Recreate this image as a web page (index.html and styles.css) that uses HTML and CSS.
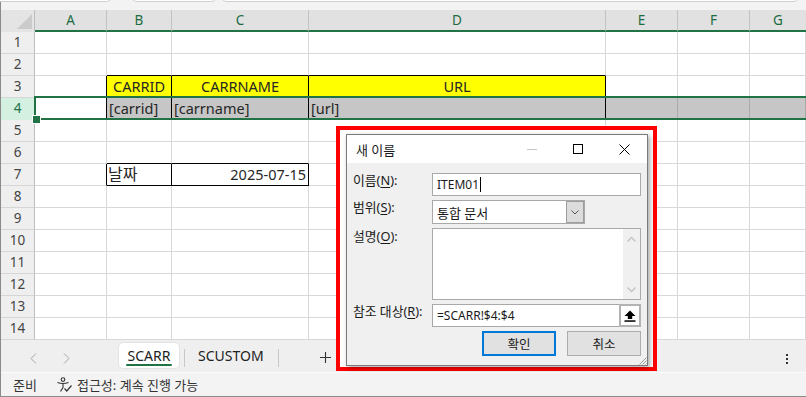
FILE: index.html
```html
<!DOCTYPE html>
<html lang="ko">
<head>
<meta charset="utf-8">
<title>SCARR</title>
<link rel="stylesheet" href="styles.css">
</head>
<body>
<div class="app">
  <div class="topbar">
    <div class="tb-box tb1"></div>
    <div class="tb-box tb2"></div>
    <div class="tb-box tb3"></div>
  </div>

  <div class="sheet">
    <div class="r hdr">
      <div class="corner"><span class="tri"></span></div>
      <div class="ch">A</div><div class="ch">B</div><div class="ch">C</div><div class="ch">D</div><div class="ch">E</div><div class="ch">F</div><div class="ch last">G</div>
    </div>
    <div class="r"><div class="rh">1</div><div class="c"></div><div class="c"></div><div class="c"></div><div class="c"></div><div class="c"></div><div class="c"></div><div class="c"></div></div>
    <div class="r"><div class="rh">2</div><div class="c"></div><div class="c bB"></div><div class="c bB"></div><div class="c bB"></div><div class="c"></div><div class="c"></div><div class="c"></div></div>
    <div class="r"><div class="rh">3</div><div class="c bR"></div><div class="c y bR bB ctr">CARRID</div><div class="c y bR bB ctr">CARRNAME</div><div class="c y bR bB ctr">URL</div><div class="c"></div><div class="c"></div><div class="c"></div></div>
    <div class="r sel"><div class="rh selh">4</div><div class="c bR"></div><div class="c g bR">[carrid]</div><div class="c g bR">[carrname]</div><div class="c g bR">[url]</div><div class="c g"></div><div class="c g"></div><div class="c g"></div></div>
    <div class="r"><div class="rh">5</div><div class="c"></div><div class="c"></div><div class="c"></div><div class="c"></div><div class="c"></div><div class="c"></div><div class="c"></div></div>
    <div class="r"><div class="rh">6</div><div class="c"></div><div class="c bB"></div><div class="c bB"></div><div class="c"></div><div class="c"></div><div class="c"></div><div class="c"></div></div>
    <div class="r"><div class="rh">7</div><div class="c bR"></div><div class="c bR bB ko">날짜</div><div class="c bR bB rt">2025-07-15</div><div class="c"></div><div class="c"></div><div class="c"></div><div class="c"></div></div>
    <div class="r"><div class="rh">8</div><div class="c"></div><div class="c"></div><div class="c"></div><div class="c"></div><div class="c"></div><div class="c"></div><div class="c"></div></div>
    <div class="r"><div class="rh">9</div><div class="c"></div><div class="c"></div><div class="c"></div><div class="c"></div><div class="c"></div><div class="c"></div><div class="c"></div></div>
    <div class="r"><div class="rh">10</div><div class="c"></div><div class="c"></div><div class="c"></div><div class="c"></div><div class="c"></div><div class="c"></div><div class="c"></div></div>
    <div class="r"><div class="rh">11</div><div class="c"></div><div class="c"></div><div class="c"></div><div class="c"></div><div class="c"></div><div class="c"></div><div class="c"></div></div>
    <div class="r"><div class="rh">12</div><div class="c"></div><div class="c"></div><div class="c"></div><div class="c"></div><div class="c"></div><div class="c"></div><div class="c"></div></div>
    <div class="r"><div class="rh">13</div><div class="c"></div><div class="c"></div><div class="c"></div><div class="c"></div><div class="c"></div><div class="c"></div><div class="c"></div></div>
    <div class="r"><div class="rh">14</div><div class="c"></div><div class="c"></div><div class="c"></div><div class="c"></div><div class="c"></div><div class="c"></div><div class="c"></div></div>
  </div>

  <div class="tabbar">
    <svg class="nav nav1" width="7" height="11" viewBox="0 0 7 11"><polyline points="6,0.5 1,5.5 6,10.5" fill="none" stroke="#a6a6a6" stroke-width="1"/></svg>
    <svg class="nav nav2" width="7" height="11" viewBox="0 0 7 11"><polyline points="1,0.5 6,5.5 1,10.5" fill="none" stroke="#a6a6a6" stroke-width="1"/></svg>
    <div class="tab active">SCARR</div>
    <span class="sep"></span>
    <div class="tab tab2">SCUSTOM</div>
    <span class="sep sep2"></span>
    <svg class="plus" width="11" height="11" viewBox="0 0 11 11"><path d="M5.5 0V11M0 5.5H11" stroke="#333" stroke-width="1.1"/></svg>
    <svg class="more" width="2" height="10" viewBox="0 0 2 10"><rect x="0" y="0" width="2" height="2" fill="#333"/><rect x="0" y="4" width="2" height="2" fill="#333"/><rect x="0" y="8" width="2" height="2" fill="#333"/></svg>
  </div>

  <div class="status">
    <span class="ready">준비</span>
    <svg class="acc" width="17" height="16" viewBox="0 0 17 16"><circle cx="7" cy="2.6" r="1.8" fill="none" stroke="#333" stroke-width="1.1"/><path d="M1.5 5.5 Q7 7.5 12.5 5.5" fill="none" stroke="#333" stroke-width="1.1"/><path d="M7 6.8 V10.5 L4.5 14.5" fill="none" stroke="#333" stroke-width="1.1"/><path d="M8.5 11.5 L10.8 14 L15.5 8.5" fill="none" stroke="#333" stroke-width="1.2"/></svg>
    <span class="acc-text">접근성: 계속 진행 가능</span>
  </div>

  <div class="annot">
    <div class="dlg">
      <div class="dlg-title">
        <span class="dlg-name">새 이름</span>
        <span class="wbtn"><svg width="10" height="10" viewBox="0 0 10 10"><path d="M0 5.5H10" stroke="#c4c4c4" stroke-width="1"/></svg></span>
        <span class="wbtn"><svg width="10" height="10" viewBox="0 0 10 10"><rect x="0.5" y="0.5" width="9" height="9" fill="none" stroke="#000" stroke-width="1"/></svg></span>
        <span class="wbtn"><svg width="11" height="11" viewBox="0 0 11 11"><path d="M0.5 0.5L10.5 10.5M10.5 0.5L0.5 10.5" stroke="#000" stroke-width="1"/></svg></span>
      </div>
      <div class="dlg-body">
        <div class="frow">
          <span class="lbl">이름(<u>N</u>):</span>
          <div class="field input"><span>ITEM01</span><span class="caret"></span></div>
        </div>
        <div class="frow">
          <span class="lbl">범위(<u>S</u>):</span>
          <div class="field select"><span class="ko-f">통합 문서</span><span class="dd"><svg width="8" height="5" viewBox="0 0 8 5"><polyline points="0.5,0.5 4,4 7.5,0.5" fill="none" stroke="#555" stroke-width="1"/></svg></span></div>
        </div>
        <div class="frow">
          <span class="lbl lbl-ta">설명(<u>O</u>):</span>
          <div class="field textarea"><span class="vscroll"><svg width="17" height="70" viewBox="0 0 17 70"><polyline points="4.5,12.5 8.5,8.5 12.5,12.5" fill="none" stroke="#c2c2c2" stroke-width="1.3"/><polyline points="4.5,58.5 8.5,62.5 12.5,58.5" fill="none" stroke="#c2c2c2" stroke-width="1.3"/></svg></span></div>
        </div>
        <div class="frow">
          <span class="lbl">참조 대상(<u>R</u>):</span>
          <div class="field input ref"><span>=SCARR!$4:$4</span><span class="refbtn"><svg width="12" height="12" viewBox="0 0 12 12"><polygon points="6,0.5 0.5,6 3.8,6 3.8,9 8.2,9 8.2,6 11.5,6" fill="#000"/><rect x="0.5" y="10.3" width="11" height="1.5" fill="#000"/></svg></span></div>
        </div>
        <div class="btns">
          <button class="btn ok">확인</button>
          <button class="btn">취소</button>
        </div>
      </div>
      <svg class="grip" width="9" height="9" viewBox="0 0 9 9"><path d="M8.5 1.5L1.5 8.5M8.5 4.5L4.5 8.5M8.5 7.5L7.5 8.5" stroke="#9a9a9a" stroke-width="1"/></svg>
    </div>
  </div>
</div>
</body>
</html>
```

FILE: styles.css
```css
* { box-sizing: border-box; }
html, body { margin: 0; padding: 0; }
body {
  width: 806px;
  height: 397px;
  overflow: hidden;
  background: #fff;
  font-family: "Noto Sans", "Noto Sans CJK KR", sans-serif;
  color: #262626;
}
.app {
  position: relative;
  width: 806px;
  height: 397px;
  display: flex;
  flex-direction: column;
  border-left: 1px solid #8a8a8a;
}

/* top strip */
.topbar {
  height: 10px;
  flex: none;
  display: flex;
  background: #f3f3f3;
}
.tb-box {
  flex: none;
  height: 12px;
  margin-top: -10px;
  background: #fff;
  border: 1px solid #cfcfcf;
  border-radius: 4px;
}
.tb1 { margin-left: -5px; width: 115px; }
.tb2 { margin-left: 21px; width: 84px; }
.tb3 { margin-left: 6px; width: 576px; }

/* sheet */
.sheet {
  height: 330px;
  flex: none;
  display: flex;
  flex-direction: column;
}
.r {
  display: grid;
  grid-template-columns: 34px 72px 65px 137px 297px 72px 72px 1fr;
  height: 22px;
  flex: none;
}
.c {
  border-right: 1px solid #d8d8d8;
  border-bottom: 1px solid #d8d8d8;
  font-size: 14.5px;
  line-height: 21px;
  padding: 0 2px;
  white-space: nowrap;
  overflow: hidden;
  color: #262626;
}
.c.ko { font-size: 16px; padding-left: 1px; }
.rh {
  background: #efefef;
  border-right: 1px solid #bdbdbd;
  border-bottom: 1px solid #d6d6d6;
  font-size: 13.5px;
  line-height: 21px;
  text-align: center;
  color: #444;
}
.corner {
  background: #e4e4e4;
  border-right: 1px solid #bdbdbd;
  border-bottom: 2px solid #e4e4e4;
  display: flex;
  justify-content: flex-end;
  align-items: flex-end;
  padding: 0 2px 1px 0;
}
.tri {
  width: 0;
  height: 0;
  border-left: 15px solid transparent;
  border-bottom: 15px solid #cbcbcb;
}
.ch {
  background: #e1e1e1;
  border-right: 1px solid #c2c2c2;
  border-bottom: 2px solid #217346;
  color: #1d6b40;
  font-size: 13.5px;
  line-height: 20px;
  text-align: center;
}
.ch.last { border-right: none; }

.y { background: #ffff00; }
.g { background: #c6c6c6; border-right-color: #a9a9a9; border-bottom-color: #a9a9a9; }
.bR { border-right-color: #000; }
.bB { border-bottom-color: #000; }
.ctr { text-align: center; }
.rt { text-align: right; }

.sel { position: relative; z-index: 2; }
.sel::after {
  content: "";
  position: absolute;
  left: 33px;
  top: -2px;
  right: -4px;
  bottom: 0;
  border: 2px solid #217346;
  pointer-events: none;
}
.sel::before {
  content: "";
  position: absolute;
  left: 31px;
  top: 17px;
  width: 7px;
  height: 7px;
  background: #217346;
  border: 1px solid #fff;
  z-index: 3;
}
.selh {
  background: #d3f0e0;
  color: #217346;
  border-bottom-color: #d3f0e0;
}

/* sheet tabs */
.tabbar {
  height: 32px;
  flex: none;
  background: #efefef;
  display: flex;
  align-items: center;
  font-size: 14px;
  color: #222;
}
.nav { flex: none; margin-top: 5px; }
.nav1 { margin-left: 29px; }
.nav2 { margin-left: 26px; }
.tab {
  flex: none;
  height: 27px;
  line-height: 25px;
  align-self: flex-start;
  margin-top: 2px;
  white-space: nowrap;
}
.tab.active {
  margin-left: 48px;
  width: 62px;
  background: #fff;
  border: 1px solid #e3e3e3;
  border-radius: 5px;
  text-align: center;
  position: relative;
}
.tab.active::after {
  content: "";
  position: absolute;
  left: 7px;
  right: 7px;
  bottom: 2px;
  height: 2px;
  border-radius: 1px;
  background: #217346;
}
.tab2 { margin-left: 13px; padding-top: 1px; }
.sep {
  flex: none;
  width: 1px;
  height: 18px;
  background: #c8c8c8;
  margin-left: 4px;
  margin-top: 4px;
}
.sep2 { margin-left: 14px; }
.plus { flex: none; margin-left: 41px; margin-top: 3px; }
.more { flex: none; margin-left: auto; margin-right: 18px; margin-top: 6px; }

/* status bar */
.status {
  height: 25px;
  flex: none;
  background: #f3f3f3;
  border-top: 1px solid #fbfbfb;
  border-bottom: 1px solid #8a8a8a;
  display: flex;
  align-items: center;
  font-size: 13px;
  color: #333;
  padding-left: 12px;
}
.acc { margin-left: 19px; flex: none; }
.acc-text { margin-left: 4px; }

/* annotation + dialog */
.annot {
  position: absolute;
  left: 335px;
  top: 126px;
  width: 321px;
  height: 245px;
  border: 4px solid #ff0000;
  background: #fff;
  padding: 4px 5px 1px 6px;
  z-index: 5;
}
.dlg {
  position: relative;
  width: 302px;
  height: 232px;
  border: 1px solid #7a7a7a;
  background: #f0f0f0;
  box-shadow: 2px 2px 5px rgba(0, 0, 0, 0.35);
  display: flex;
  flex-direction: column;
  font-size: 12px;
  color: #1a1a1a;
}
.dlg-title {
  height: 28px;
  flex: none;
  background: #fff;
  display: flex;
  align-items: center;
  padding-left: 9px;
}
.dlg-name { flex: 1; font-size: 13px; }
.wbtn {
  flex: none;
  width: 46px;
  height: 28px;
  display: flex;
  align-items: center;
  justify-content: center;
}
.dlg-body {
  flex: 1;
  padding: 10px 6px 9px 6px;
  display: flex;
  flex-direction: column;
  gap: 4px;
}
.frow { display: flex; align-items: flex-start; }
.lbl {
  width: 79px;
  flex: none;
  font-size: 12.8px;
  line-height: 15px;
  white-space: nowrap;
}
.lbl u { text-underline-offset: 2px; }
.field {
  flex: none;
  border: 1px solid #a9a9a9;
  background: #fff;
  display: flex;
  align-items: center;
}
.input { width: 209px; height: 23px; padding-left: 4px; }
.caret {
  width: 1px;
  height: 15px;
  background: #000;
  margin-left: 1px;
}
.select { width: 153px; height: 24px; padding-left: 4px; }
.ko-f { font-size: 13px; }
.dd {
  margin-left: auto;
  width: 18px;
  height: 22px;
  background: #dcdcdc;
  box-shadow: inset 0 0 0 1px #9c9c9c;
  display: flex;
  align-items: center;
  justify-content: center;
}
.textarea { width: 209px; height: 72px; align-items: stretch; }
.lbl-ta { margin-top: 1px; }
.vscroll {
  margin-left: auto;
  width: 17px;
  background: #f0f0f0;
  display: flex;
  align-items: flex-start;
}
.ref { position: relative; }
.refbtn {
  margin-left: auto;
  margin-right: -1px;
  width: 22px;
  height: 23px;
  border: 2px solid #b3b3b3;
  background: #fff;
  display: flex;
  align-items: center;
  justify-content: center;
}
.btns {
  display: flex;
  justify-content: flex-end;
  gap: 11px;
  height: 25px;
}
.btn {
  width: 74px;
  height: 25px;
  border: 1px solid #adadad;
  background: #e1e1e1;
  font-family: inherit;
  font-size: 12.5px;
  color: #1a1a1a;
  padding: 0;
  margin: 0;
}
.btn.ok { border: 2px solid #0078d7; }
.grip { position: absolute; right: 0; bottom: 0; }
```
